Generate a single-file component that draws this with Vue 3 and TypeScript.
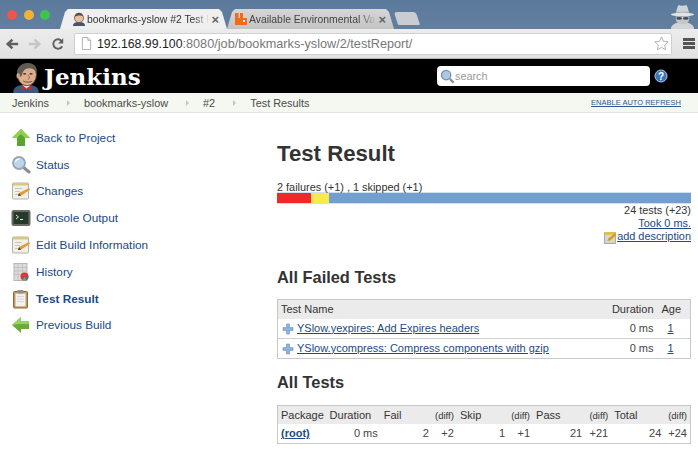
<script setup lang="ts">
const crumbs = ["Jenkins", "bookmarks-yslow", "#2", "Test Results"];

const navItems = [
  { label: "Back to Project", icon: "up" },
  { label: "Status", icon: "search" },
  { label: "Changes", icon: "notepad" },
  { label: "Console Output", icon: "terminal" },
  { label: "Edit Build Information", icon: "notepad" },
  { label: "History", icon: "history" },
  { label: "Test Result", icon: "clipboard", active: true },
  { label: "Previous Build", icon: "left" },
];

const failedTests = [
  { name: "YSlow.yexpires: Add Expires headers", duration: "0 ms", age: "1" },
  { name: "YSlow.ycompress: Compress components with gzip", duration: "0 ms", age: "1" },
];

const allTestsCols = [49, 54, 51, 25, 51, 25, 52, 26, 53, 26];
</script>

<template>
  <div class="page">
    <!-- browser chrome -->
    <div class="tabstrip">
      <div class="lights">
        <span class="light red"></span>
        <span class="light amber"></span>
        <span class="light green"></span>
      </div>
      <div class="tab active">
        <svg class="favicon" viewBox="0 0 14 14">
          <path d="M1 14c0-3 2-4 6-4s6 1 6 4z" fill="#3c5a78" />
          <circle cx="7" cy="6" r="4.6" fill="#e8bfa0" stroke="#6b4a3a" stroke-width=".7" />
          <path d="M2.6 5c.4-3 2.4-4.4 4.9-4.2C10 1 11 3 11 4.500 9 3 5 3 2.600 5z" fill="#55504a" />
          <path d="M5.500 11l1.500.8 1.500-.8v1.500l-1.500-.6-1.500.6z" fill="#c8281e" />
        </svg>
        <span class="tab-title">bookmarks-yslow #2 Test R</span>
        <span class="tab-close">×</span>
      </div>
      <div class="tab second">
        <svg class="favicon" viewBox="0 0 14 14">
          <path d="M1 1h3.500v5H6V1h3v5h4v7H1z" fill="#f26b1d" />
          <rect x="9" y="8" width="2" height="2" fill="#fff" />
        </svg>
        <span class="tab-title">Available Environmental Va</span>
        <span class="tab-close">×</span>
      </div>
      <div class="newtab"></div>
      <svg class="incognito" viewBox="0 0 28 26">
        <path d="M2 26c0-4 4-7 12-7s12 3 12 7z" fill="#d2d5d8" />
        <path d="M7 10c1-5 2-8 3-9 2 1 6 1 8 0 1 1 2 4 3 9z" fill="#cfd3d7" />
        <path d="M7 8h14v2.500H7z" fill="#aeb3b8" />
        <ellipse cx="14" cy="11" rx="12" ry="1.800" fill="#e2e4e6" />
        <path d="M7 13h14v2c0 4-3 6-7 6s-7-2-7-6z" fill="#c3c7cb" />
        <ellipse cx="10.500" cy="15" rx="3" ry="1.500" fill="#4a4a4a" />
        <ellipse cx="17.500" cy="15" rx="3" ry="1.500" fill="#4a4a4a" />
      </svg>
    </div>
    <div class="toolbar">
      <svg class="nav-btn" viewBox="0 0 16 16">
        <path d="M15 8H4M8.500 3 3 8l5.500 5" fill="none" stroke="#5f5f5f" stroke-width="2.800" />
      </svg>
      <svg class="nav-btn" viewBox="0 0 16 16">
        <path d="M1 8h11M7.500 3 13 8l-5.500 5" fill="none" stroke="#c6c6c6" stroke-width="2.800" />
      </svg>
      <svg class="nav-btn" viewBox="0 0 16 16">
        <path d="M12.800 10.500A5.400 5.400 0 1 1 12.400 4.800" fill="none" stroke="#5f5f5f" stroke-width="2.200" />
        <path d="M14 1.500v6H8z" fill="#5f5f5f" />
      </svg>
      <div class="omnibox">
        <svg class="page-icon" viewBox="0 0 12 14">
          <path d="M1.500.5h6l3 3v10h-9z" fill="#fff" stroke="#aaa" />
          <path d="M7.500.5v3h3" fill="#eee" stroke="#aaa" />
        </svg>
        <span class="url"><b>192.168.99.100</b>:8080/job/bookmarks-yslow/2/testReport/</span>
        <svg class="star" viewBox="0 0 16 16">
          <path d="M8 1l2.100 4.600 5 .6-3.700 3.400 1 5L8 12.100 3.600 14.600l1-5L.9 6.200l5-.6z" fill="#fff" stroke="#9a9a9a" stroke-width=".8" />
        </svg>
      </div>
      <div class="menu"><i></i><i></i><i></i></div>
    </div>

    <!-- jenkins header -->
    <header class="jenkins">
      <svg class="butler" viewBox="0 0 30 34">
        <path d="M1 34c0-6 4-9 14-9s14 3 14 9z" fill="#3a5a7c" />
        <path d="M11 25h9l-4 5z" fill="#f4f4f4" />
        <path d="M10 26l5.500 2.500L21 26v5l-5.500-2L10 31z" fill="#cc2a20" />
        <ellipse cx="16" cy="14" rx="10.500" ry="12" fill="#dcae8c" stroke="#5a4034" />
        <path d="M6 16C3 6 10 1 17 1s11 5 9.500 10c-3-3-5.500-5-9.500-4-4 .5-6 4-7 9z" fill="#5f5a54" />
        <ellipse cx="6.500" cy="15" rx="2" ry="3" fill="#cf9f80" />
        <path d="M12 13h3M19 13h3" stroke="#222" stroke-width="1.200" />
        <path d="M17 14c2 2 3 4 0 5" fill="none" stroke="#8a5a44" />
        <path d="M12 21c3 1.500 7 1.500 10 0" fill="none" stroke="#6a4434" />
      </svg>
      <span class="brand">Jenkins</span>
      <div class="searchbox">
        <svg class="search-icon" viewBox="0 0 16 16">
          <circle cx="6.500" cy="6.500" r="5" fill="#a9c9ea" stroke="#7f8f9f" stroke-width="1.400" />
          <path d="M10.500 10.500l4 4" stroke="#8f8f8f" stroke-width="2.400" />
        </svg>
        <span class="search-text">search</span>
      </div>
      <svg class="help" viewBox="0 0 14 14">
        <circle cx="7" cy="7" r="6" fill="#3a78b8" stroke="#a6c6e6" />
        <text x="7" y="10.500" text-anchor="middle" class="help-q">?</text>
      </svg>
    </header>

    <nav class="crumbs">
      <template v-for="(c, i) in crumbs" :key="c">
        <span class="crumb">{{ c }}</span>
        <span v-if="i < crumbs.length - 1" class="crumb-arrow"></span>
      </template>
      <a class="refresh">ENABLE AUTO REFRESH</a>
    </nav>

    <div class="content">
      <aside class="side">
        <div v-for="item in navItems" :key="item.label" class="side-row">
          <svg class="side-icon" viewBox="0 0 20 20">
            <template v-if="item.icon === 'up'">
              <path d="M10 1l9 9h-5v8H6v-8H1z" fill="#5aa52e" />
              <path d="M10 1l9 9h-5L10 6l-4 4H1z" fill="#8fd04f" />
            </template>
            <template v-else-if="item.icon === 'left'">
              <path d="M1 10l9-8v4h8v8h-8v4z" fill="#6aac3a" />
              <path d="M1 10l9-8v4h8v3H8z" fill="#9bd162" />
            </template>
            <template v-else-if="item.icon === 'search'">
              <path d="M12 12l6 5" stroke="#8d8d8d" stroke-width="3" stroke-linecap="round" />
              <circle cx="8" cy="8" r="6" fill="#bcd6f0" stroke="#9aa6b2" stroke-width="1.800" />
              <path d="M4.500 7a4 4 0 0 1 4-3" fill="none" stroke="#fff" stroke-width="1.200" />
            </template>
            <template v-else-if="item.icon === 'notepad'">
              <rect x="1.500" y="2" width="16" height="16" rx="1" fill="#f2f0e6" stroke="#b5b2a4" />
              <rect x="2" y="2" width="15" height="2.500" fill="#d9c78a" />
              <path d="M4 7.500h7M4 10.500h5M4 13.500h4" stroke="#c9c7ba" />
              <path d="M7 15l1-3 10-5 1 1.800-9 6z" fill="#e29a3c" />
              <path d="M7 15l1-3 2 2.800z" fill="#444" />
            </template>
            <template v-else-if="item.icon === 'terminal'">
              <rect x="0.500" y="2" width="19" height="16" rx="2" fill="#6a6d66" />
              <rect x="2.500" y="4" width="15" height="12" fill="#26392a" />
              <path d="M5 7l2.500 2L5 11" fill="none" stroke="#dfe8df" stroke-width="1" />
              <path d="M9 11.500h3" stroke="#dfe8df" stroke-width="1" />
            </template>
            <template v-else-if="item.icon === 'history'">
              <rect x="3" y="1.500" width="13" height="17" fill="#dcdcdc" stroke="#b5b5b5" />
              <path d="M3 5.500h13M3 9h13M3 12.500h13M7 1.500v17M11.500 1.500v17" stroke="#bdbdbd" stroke-width=".8" />
              <circle cx="13.500" cy="14.500" r="4" fill="#d83a34" />
              <path d="M13.500 14.500h4a4 4 0 0 1-2 3.500z" fill="#3e6fb5" />
              <path d="M13.500 14.500l2 3.500a4 4 0 0 1-4 0z" fill="#6aac3a" />
            </template>
            <template v-else>
              <rect x="2.500" y="2.500" width="14" height="16.500" rx="1" fill="#c49a62" stroke="#8a6a3c" />
              <rect x="4.500" y="4.500" width="10" height="12.800" fill="#f2f2f0" />
              <rect x="6.500" y="1" width="6" height="3.500" rx="1" fill="#8f8f8f" />
              <path d="M6 7.500h7M6 10h7M6 12.500h7" stroke="#d6d6d2" />
            </template>
          </svg>
          <a class="side-link" :class="{ active: item.active }">{{ item.label }}</a>
        </div>
      </aside>

      <main class="main">
        <h1>Test Result</h1>
        <div class="summary">2 failures (+1) , 1 skipped (+1)</div>
        <div class="bar">
          <span class="bar-fail"></span>
          <span class="bar-skip"></span>
          <span class="bar-pass"></span>
        </div>
        <div class="stats">
          <div>24 tests (+23)</div>
          <div><a>Took 0 ms.</a></div>
          <div class="desc">
            <svg class="desc-icon" viewBox="0 0 12 12">
              <rect x=".5" y="1.500" width="10" height="10" fill="#d8d8d0" stroke="#aaa" />
              <rect x=".5" y="1" width="10" height="2.500" fill="#e6bf3a" />
              <path d="M3 9l1-2 6-5 1.500 1.500-6 5.500z" fill="#d89a2a" />
            </svg>
            <a>add description</a>
          </div>
        </div>

        <h2 class="failed-title">All Failed Tests</h2>
        <table class="grid failed">
          <colgroup>
            <col />
            <col style="width: 56px" />
            <col style="width: 32px" />
          </colgroup>
          <thead>
            <tr>
              <th>Test Name</th>
              <th class="dur-head">Duration</th>
              <th>Age</th>
            </tr>
          </thead>
          <tbody>
            <tr v-for="t in failedTests" :key="t.name">
              <td>
                <svg class="plus" viewBox="0 0 12 12">
                  <path d="M4.500 1h3v3.500H11v3H7.500V11h-3V7.500H1v-3h3.500z" fill="#8db2dc" stroke="#6a92c2" stroke-width=".6" />
                </svg>
                <a>{{ t.name }}</a>
              </td>
              <td class="num dur">{{ t.duration }}</td>
              <td class="age"><a>{{ t.age }}</a></td>
            </tr>
          </tbody>
        </table>

        <h2 class="all-title">All Tests</h2>
        <table class="grid all">
          <colgroup>
            <col v-for="(w, i) in allTestsCols" :key="i" :style="{ width: w + 'px' }" />
          </colgroup>
          <thead>
            <tr>
              <th>Package</th>
              <th>Duration</th>
              <th>Fail</th>
              <th class="diff">(diff)</th>
              <th>Skip</th>
              <th class="diff">(diff)</th>
              <th>Pass</th>
              <th class="diff">(diff)</th>
              <th>Total</th>
              <th class="diff">(diff)</th>
            </tr>
          </thead>
          <tbody>
            <tr>
              <td><a class="root">(root)</a></td>
              <td class="num">0 ms</td>
              <td class="num">2</td>
              <td class="num">+2</td>
              <td class="num">1</td>
              <td class="num">+1</td>
              <td class="num">21</td>
              <td class="num">+21</td>
              <td class="num">24</td>
              <td class="num">+24</td>
            </tr>
          </tbody>
        </table>
      </main>
    </div>
  </div>
</template>

<style scoped>
.page {
  width: 698px;
  height: 471px;
  overflow: hidden;
  background: #fff;
  font-family: "Liberation Sans", Arial, sans-serif;
  font-size: 11px;
  color: #333;
}

.tabstrip {
  position: relative;
  height: 29px;
  display: flex;
  align-items: flex-end;
  background: linear-gradient(#5c7a9c, #627f9f);
  padding-left: 60px;
}
.lights {
  position: absolute;
  left: 7px;
  top: 10px;
  display: flex;
  gap: 6.500px;
}
.light {
  width: 10px;
  height: 10px;
  border-radius: 50%;
}
.red { background: #f0544f; }
.amber { background: #f4b13a; }
.green { background: #3fc24f; }

.tab {
  height: 20px;
  width: 167px;
  display: flex;
  align-items: center;
  padding: 0 8px 0 12px;
  box-sizing: border-box;
  clip-path: polygon(0 100%, 5px 15%, 8px 0, calc(100% - 8px) 0, calc(100% - 5px) 15%, 100% 100%);
  font-size: 10.400px;
  white-space: nowrap;
}
.tab.active {
  background: #efefef;
  color: #333;
}
.tab.second {
  background: linear-gradient(#d6d6d6, #c4c4c4);
  color: #444;
  padding-left: 7px;
}
.favicon {
  width: 14px;
  height: 14px;
  flex: none;
  margin-right: 1px;
}
.tab-title {
  flex: 1;
  min-width: 0;
  -webkit-mask-image: linear-gradient(to right, #000 88%, transparent);
  mask-image: linear-gradient(to right, #000 88%, transparent);
}
.tab-close {
  font-size: 13px;
  color: #666;
  margin-left: 2px;
  font-weight: bold;
}
.newtab {
  width: 22px;
  height: 13px;
  margin: 0 0 4px 2px;
  background: #c9ccd0;
  border-radius: 3px 3px 1px 1px;
  transform: skewX(18deg);
}
.incognito {
  position: absolute;
  right: 2px;
  top: 4px;
  width: 27px;
  height: 25px;
}

.toolbar {
  height: 29px;
  display: flex;
  align-items: center;
  background: linear-gradient(#ececec, #e2e2e2);
  border-bottom: 1px solid #b4b4b4;
  padding-left: 5px;
}
.nav-btn {
  width: 14px;
  height: 14px;
  margin-right: 9px;
  flex: none;
}
.omnibox {
  width: 598px;
  height: 22px;
  flex: none;
  display: flex;
  align-items: center;
  background: #fff;
  border: 1px solid #d0d0d0;
  border-radius: 2px;
  box-sizing: border-box;
  padding: 0 2px 0 6px;
}
.page-icon {
  width: 11px;
  height: 13px;
  margin-right: 5px;
  flex: none;
}
.url {
  flex: 1;
  font-size: 12.700px;
  color: #777;
  white-space: nowrap;
}
.url b {
  font-size: 12.300px;
  font-weight: normal;
  color: #222;
}
.star {
  width: 15px;
  height: 15px;
  flex: none;
}
.menu {
  margin-left: 11px;
  width: 12px;
  display: flex;
  flex-direction: column;
  gap: 1px;
}
.menu i {
  display: block;
  height: 3px;
  background: #555;
}

.jenkins {
  height: 34px;
  display: flex;
  align-items: center;
  background: #000;
  color: #fff;
  overflow: hidden;
}
.butler {
  width: 28px;
  height: 31px;
  margin: 3px 4px 0 12px;
  flex: none;
}
.brand {
  font-family: "DejaVu Serif", "Liberation Serif", serif;
  font-weight: bold;
  font-size: 23px;
  width: 393px;
}
.searchbox {
  width: 213px;
  height: 20px;
  display: flex;
  align-items: center;
  background: #fff;
  border-radius: 4px;
  padding-left: 3px;
  box-sizing: border-box;
}
.search-icon {
  width: 15px;
  height: 15px;
}
.search-text {
  color: #999;
  font-size: 10.800px;
}
.help {
  width: 14px;
  height: 14px;
  margin-left: 4px;
}
.help-q {
  font-family: "Liberation Sans", sans-serif;
  font-size: 10px;
  font-weight: bold;
  fill: #fff;
}

.crumbs {
  height: 20px;
  display: flex;
  align-items: center;
  padding-left: 12px;
  background: #f5f8f1;
  border-bottom: 1px solid #e3e3e0;
  box-sizing: border-box;
  font-size: 10.900px;
  color: #4a4a4a;
}
.crumb-arrow {
  width: 0;
  height: 0;
  margin: 0 14px 0 18px;
  border-left: 3px solid #c4c8c4;
  border-top: 3px solid transparent;
  border-bottom: 3px solid transparent;
}
.refresh {
  margin-left: auto;
  margin-right: 17px;
  font-size: 7.500px;
  color: #2f5a96;
  text-decoration: underline;
}

.content {
  display: flex;
}
.side {
  width: 277px;
  flex: none;
  padding: 11.500px 0 0 11px;
  box-sizing: border-box;
}
.side-row {
  height: 26.800px;
  display: flex;
  align-items: center;
}
.side-icon {
  width: 20px;
  height: 20px;
  flex: none;
  margin-right: 5px;
}
.side-link {
  color: #204a87;
  font-size: 11.800px;
}
.side-link.active {
  font-weight: bold;
}

.main {
  width: 414px;
  flex: none;
}
h1 {
  margin: 28px 0 0;
  font-size: 22.200px;
  line-height: 26px;
  color: #333;
}
.summary {
  margin-top: 14px;
  font-size: 10.900px;
  line-height: 12px;
}
.bar {
  display: flex;
  height: 10px;
  border-top: 1px solid #cfdff0;
  border-bottom: 1px solid #cfdff0;
  margin-top: -1px;
}
.bar-fail { width: 34px; background: #ef2929; }
.bar-skip { width: 18px; background: #fce94f; }
.bar-pass { flex: 1; background: #729fcf; }

.stats {
  text-align: right;
  font-size: 10.900px;
  line-height: 12.600px;
}
.stats a, .grid a {
  color: #204a87;
  text-decoration: underline;
}
.desc {
  display: flex;
  justify-content: flex-end;
  align-items: center;
  height: 12.600px;
  margin-top: 1px;
}
.desc-icon {
  width: 13px;
  height: 13px;
  margin-top: 3px;
}

h2 {
  font-size: 16.400px;
  line-height: 20px;
  margin: 0;
  color: #333;
}
.failed-title { margin-top: 24px; }
.all-title { margin-top: 13px; }

.grid {
  width: 414px;
  border-collapse: collapse;
  table-layout: fixed;
  border: 1px solid #c8c8c8;
  font-size: 11px;
}
.failed { margin-top: 12px; }
.all { margin-top: 13px; }
.grid th {
  background: #ebebeb;
  font-weight: normal;
  text-align: left;
  height: 18px;
  padding: 0 3px;
  color: #333;
  white-space: nowrap;
}
.failed th {
  padding-bottom: 1px;
}
.all th {
  height: 17px;
  padding-top: 1px;
}
.grid td {
  height: 19px;
  padding: 0 3px;
  white-space: nowrap;
}
.failed tbody tr + tr td {
  border-top: 1px solid #cfcfcf;
}
.grid .dur-head { text-align: right; padding-right: 5px; }
.grid .dur { padding-right: 5px; }
.plus {
  width: 12px;
  height: 12px;
  margin: 0 3px 0 1px;
  vertical-align: -3px;
}
.num {
  text-align: right;
  color: #444;
}
.grid .age {
  padding-left: 9px;
}
.grid .diff {
  font-size: 9.500px;
  text-align: right;
  padding-left: 0;
}
.root {
  font-weight: bold;
}
</style>
